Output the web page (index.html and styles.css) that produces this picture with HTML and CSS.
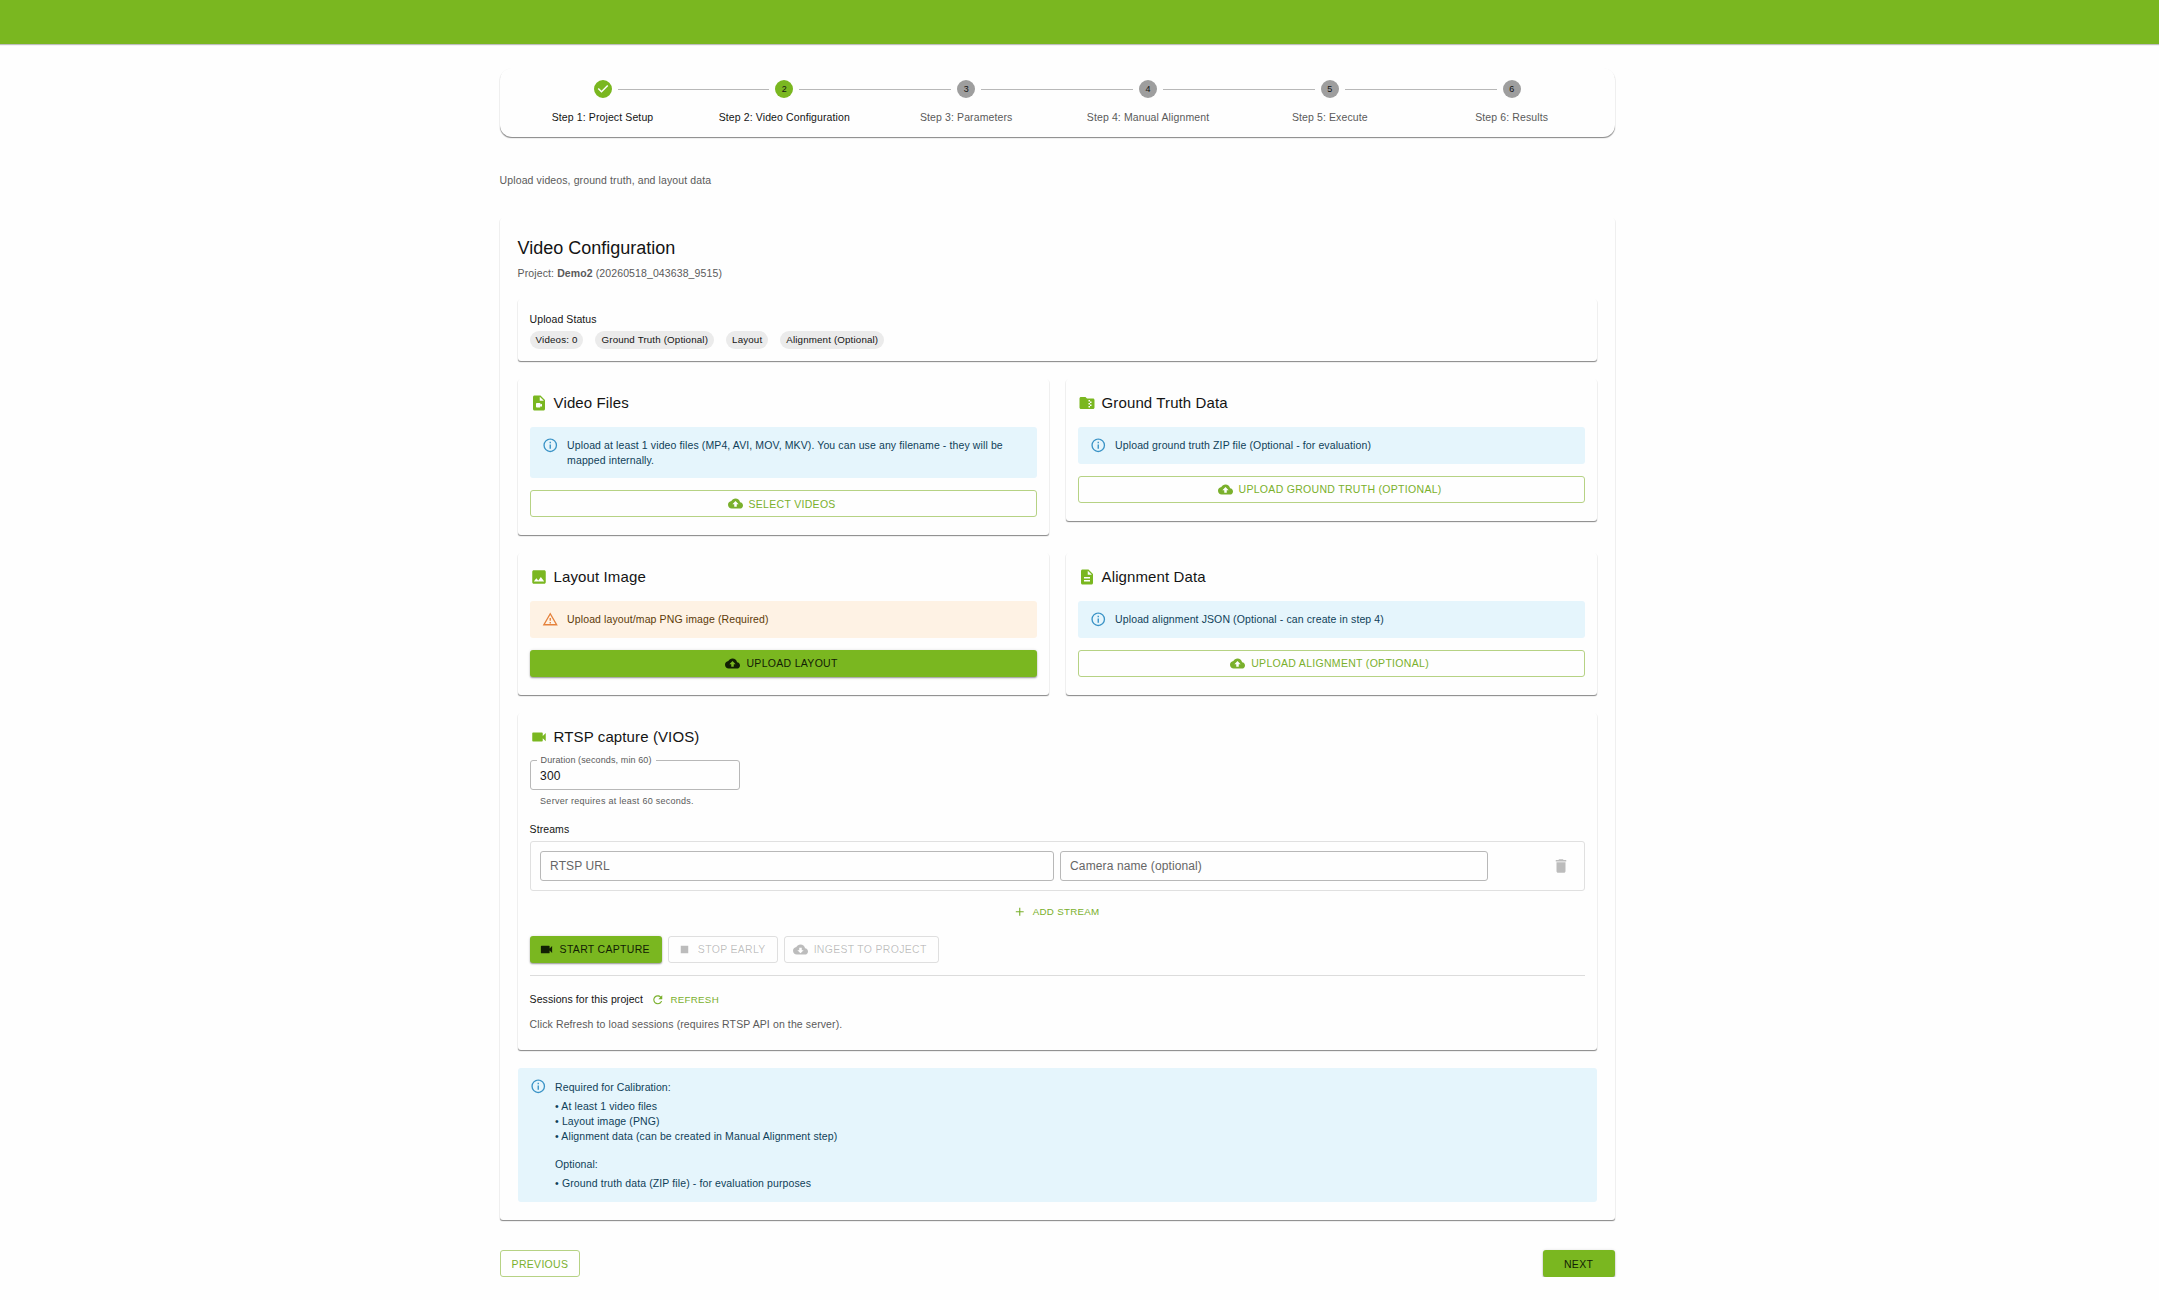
FILE: index.html
```html
<!DOCTYPE html>
<html lang="en">
  <head>
    <meta charset="UTF-8" />
    <meta name="viewport" content="width=device-width, initial-scale=1.0" />
    <title>Video Configuration</title>
    <link rel="stylesheet" href="styles.css">
  </head>
  <body>
    <!-- Shared icons -->
    <svg class="sprite" aria-hidden="true">
      <symbol id="icon-check" viewBox="0 0 24 24"><path d="M12 0a12 12 0 1 0 0 24 12 12 0 0 0 0-24zm-2 17l-5-5 1.4-1.4 3.6 3.6 7.6-7.6L19 8l-9 9z" /></symbol>
      <symbol id="icon-video-file" viewBox="0 0 24 24"><path d="M14 2H6c-1.1 0-1.99.9-1.99 2L4 20c0 1.1.89 2 1.99 2H18c1.1 0 2-.9 2-2V8zm-1 7V3.5L18.5 9zm1 5 2-1.06v4.12L14 16v1c0 .55-.45 1-1 1H9c-.55 0-1-.45-1-1v-4c0-.55.45-1 1-1h4c.55 0 1 .45 1 1z" /></symbol>
      <symbol id="icon-folder-zip" viewBox="0 0 24 24"><path d="M20 6h-8l-2-2H4c-1.1 0-1.99.9-1.99 2L2 18c0 1.1.9 2 2 2h16c1.1 0 2-.9 2-2V8c0-1.1-.9-2-2-2m-2 6h-2v2h2v2h-2v2h-2v-2h2v-2h-2v-2h2v-2h-2V8h2v2h2z" /></symbol>
      <symbol id="icon-image" viewBox="0 0 24 24"><path d="M21 19V5c0-1.1-.9-2-2-2H5c-1.1 0-2 .9-2 2v14c0 1.1.9 2 2 2h14c1.1 0 2-.9 2-2M8.5 13.5l2.5 3.01L14.5 12l4.5 6H5z" /></symbol>
      <symbol id="icon-description" viewBox="0 0 24 24"><path d="M14 2H6c-1.1 0-1.99.9-1.99 2L4 20c0 1.1.89 2 1.99 2H18c1.1 0 2-.9 2-2V8zm2 16H8v-2h8zm0-4H8v-2h8zm-3-5V3.5L18.5 9z" /></symbol>
      <symbol id="icon-videocam" viewBox="0 0 24 24"><path d="M17 10.5V7c0-.55-.45-1-1-1H4c-.55 0-1 .45-1 1v10c0 .55.45 1 1 1h12c.55 0 1-.45 1-1v-3.5l4 4v-11z" /></symbol>
      <symbol id="icon-cloud-upload" viewBox="0 0 24 24"><path d="M19.35 10.04C18.67 6.59 15.64 4 12 4 9.11 4 6.6 5.64 5.35 8.04 2.34 8.36 0 10.91 0 14c0 3.31 2.69 6 6 6h13c2.76 0 5-2.24 5-5 0-2.64-2.05-4.78-4.65-4.96M14 13v4h-4v-4H7l5-5 5 5z" /></symbol>
      <symbol id="icon-cloud-download" viewBox="0 0 24 24"><path d="M19.35 10.04C18.67 6.59 15.64 4 12 4 9.11 4 6.6 5.64 5.35 8.04 2.34 8.36 0 10.91 0 14c0 3.31 2.69 6 6 6h13c2.76 0 5-2.24 5-5 0-2.64-2.05-4.78-4.65-4.96M17 13l-5 5-5-5h3V9h4v4z" /></symbol>
      <symbol id="icon-info" viewBox="0 0 24 24"><path d="M11 9h2V7h-2m1 13c-4.41 0-8-3.59-8-8s3.59-8 8-8 8 3.59 8 8-3.59 8-8 8m0-18A10 10 0 0 0 2 12a10 10 0 0 0 10 10 10 10 0 0 0 10-10A10 10 0 0 0 12 2m-1 15h2v-6h-2z" /></symbol>
      <symbol id="icon-warning" viewBox="0 0 24 24"><path d="M12 5.99L19.53 19H4.47L12 5.99M12 2L1 21h22L12 2zm1 14h-2v2h2v-2zm0-6h-2v4h2v-4z" /></symbol>
      <symbol id="icon-delete" viewBox="0 0 24 24"><path d="M6 19c0 1.1.9 2 2 2h8c1.1 0 2-.9 2-2V7H6zM19 4h-3.5l-1-1h-5l-1 1H5v2h14z" /></symbol>
      <symbol id="icon-add" viewBox="0 0 24 24"><path d="M19 13h-6v6h-2v-6H5v-2h6V5h2v6h6z" /></symbol>
      <symbol id="icon-stop" viewBox="0 0 24 24"><path d="M6 6h12v12H6z" /></symbol>
      <symbol id="icon-refresh" viewBox="0 0 24 24"><path d="M17.65 6.35C16.2 4.9 14.21 4 12 4c-4.42 0-7.99 3.58-7.99 8s3.57 8 7.99 8c3.73 0 6.84-2.55 7.73-6h-2.08c-.82 2.33-3.04 4-5.65 4-3.31 0-6-2.69-6-6s2.69-6 6-6c1.66 0 3.14.69 4.22 1.78L13 11h7V4z" /></symbol>
    </svg>

    <header class="app-bar"></header>

    <main class="container">
      <div class="paper stepper">
        <div class="step active">
          <div class="step-track">
            <span class="line hidden"></span>
            <svg class="step-check"><use href="#icon-check" /></svg>
            <span class="line"></span>
          </div>
          <span class="step-label">Step 1: Project Setup</span>
        </div>
        <div class="step active">
          <div class="step-track">
            <span class="line"></span>
            <span class="step-number">2</span>
            <span class="line"></span>
          </div>
          <span class="step-label">Step 2: Video Configuration</span>
        </div>
        <div class="step">
          <div class="step-track">
            <span class="line"></span>
            <span class="step-number">3</span>
            <span class="line"></span>
          </div>
          <span class="step-label">Step 3: Parameters</span>
        </div>
        <div class="step">
          <div class="step-track">
            <span class="line"></span>
            <span class="step-number">4</span>
            <span class="line"></span>
          </div>
          <span class="step-label">Step 4: Manual Alignment</span>
        </div>
        <div class="step">
          <div class="step-track">
            <span class="line"></span>
            <span class="step-number">5</span>
            <span class="line"></span>
          </div>
          <span class="step-label">Step 5: Execute</span>
        </div>
        <div class="step">
          <div class="step-track">
            <span class="line"></span>
            <span class="step-number">6</span>
            <span class="line hidden"></span>
          </div>
          <span class="step-label">Step 6: Results</span>
        </div>
      </div>

      <p class="step-description">Upload videos, ground truth, and layout data</p>

      <section class="paper panel">
        <h1>Video Configuration</h1>
        <p class="project">Project: <strong>Demo2</strong> (20260518_043638_9515)</p>

        <div class="paper status">
          <h3>Upload Status</h3>
          <div class="chips">
            <span class="chip">Videos: 0</span>
            <span class="chip">Ground Truth (Optional)</span>
            <span class="chip">Layout</span>
            <span class="chip">Alignment (Optional)</span>
          </div>
        </div>

        <div class="upload-grid">
          <div class="paper card">
            <h2><svg><use href="#icon-video-file" /></svg>Video Files</h2>
            <div class="alert">
              <svg><use href="#icon-info" /></svg>
              <p>Upload at least 1 video files (MP4, AVI, MOV, MKV). You can use any filename - they will be mapped internally.</p>
            </div>
            <button class="btn btn-outlined btn-block"><svg><use href="#icon-cloud-upload" /></svg>Select Videos</button>
          </div>

          <div class="paper card">
            <h2><svg><use href="#icon-folder-zip" /></svg>Ground Truth Data</h2>
            <div class="alert">
              <svg><use href="#icon-info" /></svg>
              <p>Upload ground truth ZIP file (Optional - for evaluation)</p>
            </div>
            <button class="btn btn-outlined btn-block"><svg><use href="#icon-cloud-upload" /></svg>Upload Ground Truth (Optional)</button>
          </div>

          <div class="paper card">
            <h2><svg><use href="#icon-image" /></svg>Layout Image</h2>
            <div class="alert alert-warning">
              <svg><use href="#icon-warning" /></svg>
              <p>Upload layout/map PNG image (Required)</p>
            </div>
            <button class="btn btn-contained btn-block"><svg><use href="#icon-cloud-upload" /></svg>Upload Layout</button>
          </div>

          <div class="paper card">
            <h2><svg><use href="#icon-description" /></svg>Alignment Data</h2>
            <div class="alert">
              <svg><use href="#icon-info" /></svg>
              <p>Upload alignment JSON (Optional - can create in step 4)</p>
            </div>
            <button class="btn btn-outlined btn-block"><svg><use href="#icon-cloud-upload" /></svg>Upload Alignment (Optional)</button>
          </div>
        </div>

        <div class="paper card rtsp">
          <h2><svg><use href="#icon-videocam" /></svg>RTSP capture (VIOS)</h2>

          <fieldset class="duration">
            <legend>Duration (seconds, min 60)</legend>
            <input type="text" value="300" />
          </fieldset>
          <p class="helper">Server requires at least 60 seconds.</p>

          <h3>Streams</h3>
          <div class="stream-row">
            <input class="stream-url" type="text" placeholder="RTSP URL" />
            <input class="stream-name" type="text" placeholder="Camera name (optional)" />
            <svg class="delete"><use href="#icon-delete" /></svg>
          </div>
          <div class="add-row">
            <button class="btn btn-small"><svg><use href="#icon-add" /></svg>Add stream</button>
          </div>

          <div class="capture-actions">
            <button class="btn btn-contained"><svg><use href="#icon-videocam" /></svg>Start capture</button>
            <button class="btn btn-outlined" disabled><svg><use href="#icon-stop" /></svg>Stop early</button>
            <button class="btn btn-outlined" disabled><svg><use href="#icon-cloud-download" /></svg>Ingest to project</button>
          </div>

          <div class="sessions">
            <h3>Sessions for this project</h3>
            <button class="btn btn-small"><svg><use href="#icon-refresh" /></svg>Refresh</button>
          </div>
          <p class="sessions-hint">Click Refresh to load sessions (requires RTSP API on the server).</p>
        </div>

        <div class="alert requirements">
          <svg><use href="#icon-info" /></svg>
          <div>
            <h3>Required for Calibration:</h3>
            <p>• At least 1 video files</p>
            <p>• Layout image (PNG)</p>
            <p>• Alignment data (can be created in Manual Alignment step)</p>
            <h3 class="optional">Optional:</h3>
            <p>• Ground truth data (ZIP file) - for evaluation purposes</p>
          </div>
        </div>
      </section>

      <div class="nav-actions">
        <button class="btn btn-outlined">Previous</button>
        <button class="btn btn-contained btn-next">Next</button>
      </div>
    </main>
  </body>
</html>
```
FILE: styles.css
```css
* {
  margin: 0;
  padding: 0;
  box-sizing: border-box;
}

body {
  font-family: "Liberation Sans", Arial, sans-serif;
  font-size: 10.5px;
  line-height: 15px;
  letter-spacing: 0.01071em;
  color: #141414;
  background: #fefefe;
  overflow: hidden;
}

svg {
  fill: currentColor;
  flex-shrink: 0;
}

.sprite {
  display: none;
}

.app-bar {
  height: 44px;
  background: #7ab720;
  box-shadow: 0 1px 1px rgba(0, 0, 0, 0.25);
}

.container {
  width: 1115px;
  margin: 24px 0 0 499.6px;
}

.paper {
  background: #fefefe;
  border-radius: 3px;
  box-shadow: 0 1.5px 1px -0.75px rgba(0, 0, 0, 0.28),
    0 1px 1px rgba(0, 0, 0, 0.2), 0 1px 1.5px rgba(0, 0, 0, 0.08);
}

h1 {
  font-size: 18px;
  font-weight: 400;
  line-height: 24px;
  letter-spacing: 0;
}

h2 {
  display: flex;
  align-items: center;
  gap: 6px;
  font-size: 15px;
  font-weight: 400;
  line-height: 24px;
  letter-spacing: 0.0075em;
}

h2 svg {
  width: 18px;
  height: 18px;
  color: #7ab720;
}

h3 {
  font-size: 10.5px;
  font-weight: 400;
  line-height: 16.5px;
  letter-spacing: 0.00714em;
  margin-bottom: 3.7px;
}

/* Stepper */
.stepper {
  display: flex;
  padding: 12px;
  border-radius: 12px;
}

.step {
  flex: 1;
  display: flex;
  flex-direction: column;
  align-items: center;
  gap: 12px;
  color: #5a5a5a;
}

.step.active {
  color: #141414;
}

.step-track {
  width: 100%;
  height: 18px;
  display: flex;
  align-items: center;
  justify-content: space-between;
}

.line {
  width: calc(50% - 15px);
  height: 1px;
  background: #b8b8b8;
}

.line.hidden {
  visibility: hidden;
}

.step-check {
  width: 18px;
  height: 18px;
  color: #7ab720;
}

.step-number {
  width: 18px;
  height: 18px;
  border-radius: 50%;
  background: #9e9e9e;
  color: #141414;
  font-size: 9px;
  line-height: 18px;
  letter-spacing: 0;
  text-align: center;
}

.active .step-number {
  background: #7ab720;
}

.step-description {
  margin: 36px 0 30px;
  color: #5a5a5a;
}

/* Main panel */
.panel {
  padding: 18px;
}

.project {
  margin-top: 6.3px;
  color: #5a5a5a;
}

.status {
  margin: 18px 0;
  padding: 12px;
}

.chips {
  display: flex;
  gap: 12px;
}

.chip {
  height: 18px;
  padding: 0 6px;
  border-radius: 12px;
  background: #ebebeb;
  font-size: 9.75px;
  line-height: 18px;
  letter-spacing: 0.016em;
}

.upload-grid {
  display: grid;
  grid-template-columns: 1fr 1fr;
  align-items: start;
  gap: 18px 17px;
}

.card {
  padding: 12px 12px 18px;
}

.alert {
  display: flex;
  gap: 9px;
  margin: 12px 0 11.5px;
  padding: 10.5px 12px;
  border-radius: 3px;
  background: #e5f5fc;
  color: #0f3f59;
}

.alert svg {
  width: 16.5px;
  height: 16.5px;
  margin-top: -0.75px;
  color: #3a93c6;
}

.alert-warning {
  background: #fef2e4;
  color: #5c3a08;
}

.alert-warning svg {
  color: #e5823c;
}

/* Buttons */
.btn {
  display: inline-flex;
  align-items: center;
  justify-content: center;
  height: 27.4px;
  padding: 0 12px;
  border: none;
  border-radius: 3px;
  background: none;
  color: #7ab02c;
  font-family: inherit;
  font-size: 10.5px;
  letter-spacing: 0.02857em;
  text-transform: uppercase;
  cursor: pointer;
}

.btn svg {
  width: 15px;
  height: 15px;
  margin: 0 6px 0 -3px;
}

.btn-outlined {
  border: 1px solid #b6d284;
  padding: 0 11px;
}

.btn-contained {
  background: #7ab720;
  color: #122004;
  box-shadow: 0 1.5px 1.5px -0.75px rgba(0, 0, 0, 0.2),
    0 1px 1.5px rgba(0, 0, 0, 0.14), 0 0.75px 3px rgba(0, 0, 0, 0.12);
}

.btn-block {
  width: 100%;
}

.btn:disabled {
  color: rgba(0, 0, 0, 0.26);
  border-color: rgba(0, 0, 0, 0.12);
  cursor: default;
}

.btn-small {
  height: 23px;
  padding: 0 4px;
  font-size: 9.75px;
}

.btn-small svg {
  width: 13.5px;
  height: 13.5px;
  margin-left: -1.5px;
}

/* RTSP capture */
.rtsp {
  margin: 18px 0;
}

input {
  height: 30px;
  padding: 0 9.5px;
  border: 1px solid #b8b8b8;
  border-radius: 3px;
  background: none;
  color: #141414;
  font-family: inherit;
  font-size: 12px;
  letter-spacing: 0.00938em;
  outline: none;
}

input::placeholder {
  color: #666;
}

.duration {
  width: 210px;
  height: 34.5px;
  margin-top: 6.5px;
  padding: 0 0 0 6px;
  border: 1px solid #b8b8b8;
  border-radius: 3px;
}

.duration legend {
  height: 9px;
  padding: 0 4px;
  color: #5a5a5a;
  font-size: 9px;
  line-height: 9px;
}

.duration input {
  display: block;
  width: 100%;
  height: 22.5px;
  padding: 0 3.5px;
  border: none;
}

.helper {
  margin: 4px 0 12px;
  padding-left: 10.5px;
  color: #5a5a5a;
  font-size: 9px;
  letter-spacing: 0.03em;
}

.stream-row {
  display: flex;
  align-items: center;
  gap: 6px;
  padding: 9px;
  border: 1px solid #e0e0e0;
  border-radius: 3px;
}

.stream-url {
  width: 514px;
}

.stream-name {
  width: 428px;
}

.delete {
  width: 18px;
  height: 18px;
  margin: 0 4.5px 0 auto;
  color: rgba(0, 0, 0, 0.26);
}

.add-row {
  display: flex;
  justify-content: center;
  margin: 9px 0 12.5px;
}

.capture-actions {
  display: flex;
  gap: 6px;
  padding-bottom: 12px;
  border-bottom: 1px solid #dcdcdc;
}

.sessions {
  display: flex;
  align-items: center;
  gap: 5.5px;
  margin-top: 12px;
}

.sessions h3 {
  margin: 0;
}

.sessions-hint {
  margin-top: 6px;
  color: #5a5a5a;
}

.requirements {
  margin: 0;
  padding-bottom: 11px;
}

.requirements .optional {
  margin-top: 12px;
}

.nav-actions {
  display: flex;
  justify-content: space-between;
  margin-top: 30px;
}

.btn-next {
  width: 72px;
}
```
